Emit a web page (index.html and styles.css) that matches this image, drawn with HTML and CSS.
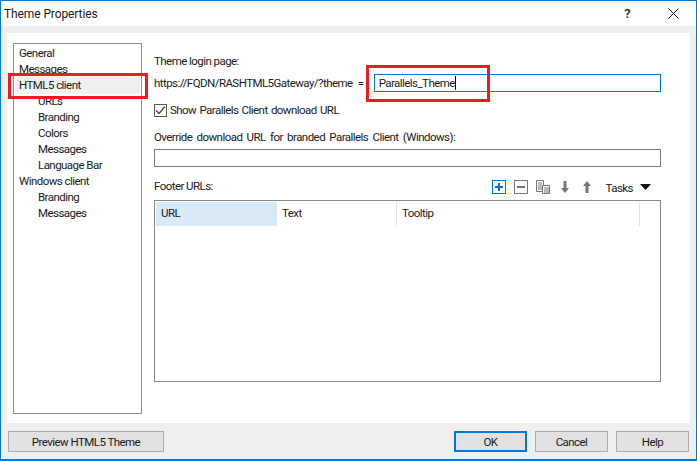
FILE: index.html
```html
<!DOCTYPE html>
<html lang="en">
<head>
<meta charset="utf-8">
<title>Theme Properties</title>
<link rel="stylesheet" href="styles.css">
</head>
<body>
<div class="window">
  <header class="titlebar">
    <span class="title">Theme Properties</span>
    <div class="title-actions">
      <span class="help-mark">?</span>
      <svg class="close-icon" width="11" height="11" viewBox="0 0 11 11"><path d="M.5.5l10 10M10.5.5l-10 10" stroke="#1a1a1a" fill="none"/></svg>
    </div>
  </header>
  <div class="content">
    <nav class="tree">
      <div class="node">General</div>
      <div class="node">Messages</div>
      <div class="node selected">HTML5 client</div>
      <div class="node child">URLs</div>
      <div class="node child">Branding</div>
      <div class="node child">Colors</div>
      <div class="node child">Messages</div>
      <div class="node child">Language Bar</div>
      <div class="node">Windows client</div>
      <div class="node child">Branding</div>
      <div class="node child">Messages</div>
    </nav>
    <main class="panel">
      <div class="label login-label">Theme login page:</div>
      <div class="url-row">
        <span class="label url-label">https://FQDN/RASHTML5Gateway/?theme =</span>
        <div class="input focused">Parallels_Theme<span class="caret"></span></div>
      </div>
      <label class="check-row">
        <span class="checkbox"><svg width="11" height="11" viewBox="0 0 11 11"><path d="M1 5.5l3 3 6-7" stroke="#444" stroke-width="1.3" fill="none"/></svg></span>
        <span class="label check-label">Show Parallels Client download URL</span>
      </label>
      <div class="label override-label">Override download URL for branded Parallels Client (Windows):</div>
      <div class="input plain"></div>
      <div class="footer-head">
        <span class="label footer-label">Footer URLs:</span>
        <div class="toolbar">
          <svg class="tool" width="14" height="14" viewBox="0 0 14 14"><rect x=".5" y=".5" width="13" height="13" fill="none" stroke="#0078d7"/><path d="M3 7h8M7 3v8" stroke="#0078d7" stroke-width="2"/></svg>
          <svg class="tool" width="14" height="14" viewBox="0 0 14 14"><rect x=".5" y=".5" width="13" height="13" fill="none" stroke="#777"/><path d="M3 7h8" stroke="#777" stroke-width="2"/></svg>
          <svg class="tool" width="14" height="14" viewBox="0 0 14 14"><path d="M.5.5h7v11h-7zM2 3h4M2 5h4M2 7h4M2 9h4" fill="none" stroke="#777"/><path d="M6 5.500h8v8H6z" fill="#fff"/><path d="M6.500 5.500h7v8h-7zM8 8h5M8 10h5M8 12h5" fill="none" stroke="#777"/></svg>
          <svg class="tool" width="14" height="14" viewBox="0 0 14 14"><path d="M5.500 1h3v7H11l-4 5-4-5h2.500z" fill="#777"/></svg>
          <svg class="tool" width="14" height="14" viewBox="0 0 14 14"><path d="M5.500 13h3V6H11L7 1 3 6h2.500z" fill="#777"/></svg>
          <span class="label tasks">Tasks</span>
          <svg class="tasks-arrow" width="11" height="6" viewBox="0 0 11 6"><path d="M0 0h11L5.500 6z" fill="#111"/></svg>
        </div>
      </div>
      <div class="table">
        <div class="thead">
          <div class="th active">URL</div>
          <div class="th">Text</div>
          <div class="th">Tooltip</div>
          <div class="th last"></div>
        </div>
      </div>
    </main>
  </div>
  <footer class="actions">
    <button class="btn preview">Preview HTML5 Theme</button>
    <div class="spacer"></div>
    <button class="btn default">OK</button>
    <button class="btn">Cancel</button>
    <button class="btn">Help</button>
  </footer>
  <div class="callout callout-nav"></div>
  <div class="callout callout-input"></div>
</div>
</body>
</html>
```
FILE: styles.css
```css
* { box-sizing: border-box; }
html, body { margin: 0; height: 100%; }
body { font: 11.5px/16px Roboto, "Noto Sans", sans-serif; letter-spacing: -0.55px; color: #1a1a1a; background: #fff; }
.window { position: relative; width: 697px; height: 461px; border: 1px solid #0078d7; border-bottom-width: 2px; display: flex; flex-direction: column; background: #efefef; overflow: hidden; }
.titlebar { height: 25px; flex: none; background: #fff; display: flex; align-items: center; justify-content: space-between; padding: 0 17px 0 3px; }
.title { font-size: 12px; letter-spacing: -0.1px; }
.title-actions { display: flex; align-items: center; gap: 38px; }
.help-mark { font-size: 13px; font-weight: 500; }
.close-icon { display: block; }
.content { flex: none; height: 390px; margin: 7px 6px 0; background: #fff; display: flex; padding: 10px 29px 9px 6px; gap: 12px; }
.tree { width: 129px; height: 371px; border: 1px solid #8c8c94; padding: 1px; flex: none; }
.node { height: 16px; padding-left: 4px; line-height: 16px; white-space: nowrap; }
.node.child { padding-left: 23px; }
.node.selected { background: #efefef; height: 17px; margin-bottom: -1px; }
.panel { flex: 1; min-width: 0; display: flex; flex-direction: column; }
.label { display: block; height: 16px; line-height: 16px; white-space: nowrap; }
.url-label { word-spacing: 3px; }
.check-label { word-spacing: 1px; }
.footer-label { line-height: 14px; }
.login-label { margin-top: 10px; }
.url-row { display: flex; align-items: center; margin-top: 5px; gap: 10px; }
.input { height: 18px; border: 1px solid #7a7a7a; line-height: 16px; padding-left: 4px; }
.input.focused { border-color: #0078d7; flex: 1; display: flex; align-items: center; }
.caret { width: 1px; height: 14px; background: #000; }
.check-row { display: flex; align-items: center; gap: 3px; margin-top: 10px; height: 16px; }
.checkbox { width: 13px; height: 13px; border: 1px solid #555; display: flex; align-items: center; justify-content: center; }
.override-label { margin-top: 11px; word-spacing: 2px; }
.input.plain { margin-top: 4px; }
.footer-head { display: flex; justify-content: space-between; align-items: center; margin-top: 12px; height: 16px; }
.toolbar { display: flex; align-items: center; gap: 8px; }
.tool { display: block; }
.tasks { margin-left: 4px; line-height: 18px; }
.tasks-arrow { margin-left: -1px; margin-right: 10px; }
.table { margin-top: 5px; height: 182px; border: 1px solid #85888c; padding: 1px; flex: none; }
.thead { display: grid; grid-template-columns: 121px 120px 243px 20px; height: 24px; }
.th { padding-left: 5px; line-height: 22px; border-right: 1px solid #e3e3e3; }
.th.active { background: #d9e9f8; border-right: 0; }
.th.last { border-right: 0; }
.actions { flex: 1; display: flex; align-items: flex-start; padding: 8px 7px 0; gap: 8px; }
.spacer { flex: 1; }
.btn { height: 21px; width: 73px; background: #e1e1e1; border: 1px solid #adadad; font: inherit; letter-spacing: inherit; color: #1a1a1a; padding: 0; }
.btn.preview { width: 156px; }
.btn.default { border: 2px solid #0078d7; }
.callout { position: absolute; border: 3px solid #ed1c24; pointer-events: none; }
.callout-nav { left: 7px; top: 72px; width: 140px; height: 26px; }
.callout-input { left: 365px; top: 64px; width: 124px; height: 37px; }
```
